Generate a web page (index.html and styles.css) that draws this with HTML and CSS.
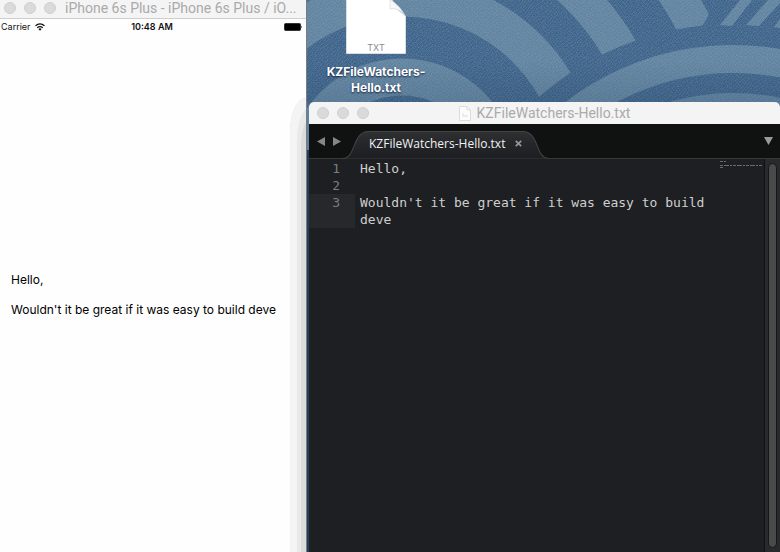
FILE: index.html
```html
<!DOCTYPE html>
<html lang="en">
<head>
<meta charset="utf-8">
<title>KZFileWatchers</title>
<link rel="stylesheet" href="styles.css">
</head>
<body>
<main class="desktop">
  <svg class="wallpaper" viewBox="0 0 780 552" preserveAspectRatio="xMinYMin slice" aria-hidden="true">
    <defs>
      <pattern id="denim" width="6" height="4" patternUnits="userSpaceOnUse">
        <path d="M0 0H1V1H0ZM3 0H4V1H3ZM2 1H3V2H2ZM5 2H6V3H5ZM1 2H2V3H1ZM4 3H5V4H4Z" fill="#b5cbd6"/>
      </pattern>
      <filter id="grain" x="0" y="0" width="100%" height="100%" color-interpolation-filters="sRGB">
        <feTurbulence type="fractalNoise" baseFrequency="0.8" numOctaves="2" seed="4"/>
        <feColorMatrix values="0 0 0 0 0.65  0 0 0 0 0.75  0 0 0 0 0.8  1.6 0 0 0 -0.6"/>
      </filter>
      <linearGradient id="shade" x1="0" y1="0" x2="0" y2="1">
        <stop offset="0" stop-color="#08203c" stop-opacity="0"/>
        <stop offset="1" stop-color="#08203c" stop-opacity=".12"/>
      </linearGradient>
    </defs>
    <rect width="780" height="552" fill="#3e638a"/>
    <g fill="none" stroke="#6183a0">
      <circle cx="402" cy="174" r="328" stroke-width="36"/>
      <circle cx="402" cy="174" r="251" stroke-width="36"/>
      <circle cx="402" cy="174" r="177" stroke-width="39"/>
      <circle cx="402" cy="174" r="97" stroke-width="37"/>
    </g>
    <path d="M709 14L703 25L690 30H720V0H702Z" fill="#3e638a"/>
    <circle cx="733" cy="319" r="295" fill="#3e638a"/>
    <path d="M740 0H752L732 26L720 25ZM768 0H780L780 3L759 26L746 25ZM780 19V28L774 27Z" fill="#6183a0"/>
    <circle cx="733" cy="319" r="260" fill="none" stroke="#6183a0" stroke-width="28"/>
    <circle cx="733" cy="319" r="226" fill="#5d80a0"/>
    <rect width="780" height="110" fill="url(#denim)" opacity=".12"/>
    <rect width="780" height="110" filter="url(#grain)" opacity=".3"/>
    <rect x="307" y="60" width="473" height="42" fill="url(#shade)"/>
    <rect y="150" width="780" height="402" fill="#213f5a"/>
  </svg>

  <section class="phone">
    <header class="titlebar phone-title">
      <span class="lights"><i></i><i></i><i></i></span>
      <h1>iPhone 6s Plus - iPhone 6s Plus / iO...</h1>
    </header>
    <div class="status">
      <span class="carrier">Carrier
        <svg width="10" height="8" viewBox="0 0 10 8" fill="none" stroke="#111" stroke-width="1.3"><path d="M.5 2.8Q5-1 9.5 2.8M2.2 4.8Q5 2.6 7.8 4.8"/><path d="M3.4 5.9Q5 4.8 6.6 5.9L5 7.8Z" fill="#111" stroke="none"/></svg>
      </span>
      <time>10:48 AM</time>
      <svg class="battery" width="19" height="8" viewBox="0 0 19 8"><rect x=".5" y=".5" width="16" height="7" rx="1" fill="#000" stroke="#333"/><path d="M17.3 2.6Q19 4 17.3 5.4Z" fill="#222"/></svg>
    </div>
    <div class="screen">
      <p>Hello,</p>
      <p>Wouldn't it be great if it was easy to build deve</p>
    </div>
    <span class="cast"></span>
  </section>

  <section class="right">
    <figure class="file">
      <svg width="60" height="54" viewBox="0 0 60 54"><path d="M.5-10H43Q45 6 59.500 16V53.500H.5Z" fill="#fff" stroke="#d8dde2"/><path d="M44-1L59 15Q52 7 44 9Z" fill="#e2e3e5"/><path d="M44-1V9Q51 7 59 15Q54 6 44-1Z" fill="#f7f7f7" stroke="#c9ccd0" stroke-width=".5"/><text x="30" y="51" text-anchor="middle" class="kind">TXT</text></svg>
      <figcaption>KZFileWatchers-<br>Hello.txt</figcaption>
    </figure>
    <article class="editor">
      <header class="titlebar editor-title">
        <span class="lights"><i></i><i></i><i></i></span>
        <h2><svg width="12" height="15" viewBox="0 0 12 15"><path d="M.5.5H8L11.500 4V14.500H.5Z" fill="#fcfcfc" stroke="#ddd"/><path d="M8 .5V4H11.500M3 10H9M3 8H5" fill="none" stroke="#ddd"/></svg>KZFileWatchers-Hello.txt</h2>
      </header>
      <nav class="tabs">
        <button class="nav-btn" aria-label="Previous tab"><svg width="8" height="9" viewBox="0 0 8 9"><path d="M8 0V9L0 4.500Z" fill="#868686"/></svg></button>
        <button class="nav-btn" aria-label="Next tab"><svg width="8" height="9" viewBox="0 0 8 9"><path d="M0 0V9L8 4.500Z" fill="#868686"/></svg></button>
        <div class="tab">
          <svg class="tab-shape" viewBox="0 0 202 29" preserveAspectRatio="none" aria-hidden="true"><defs><linearGradient id="tabfill" x1="0" y1="0" x2="0" y2="1"><stop offset="0" stop-color="#303133"/><stop offset=".5" stop-color="#242528"/><stop offset="1" stop-color="#1e1f23"/></linearGradient></defs><path d="M0 28.500C13 28 9 1.500 25 1.500H177C193 1.500 189 28 202 28.500" fill="url(#tabfill)" stroke="#434446"/></svg>
          <span>KZFileWatchers-Hello.txt</span>
          <button class="close" aria-label="Close tab"><svg width="7" height="7" viewBox="0 0 7 7"><path d="M.8.8L6.200 6.200M6.200.8L.8 6.200" stroke="#969696" stroke-width="1.700"/></svg></button>
        </div>
        <button class="more" aria-label="Tab list"><svg width="9" height="8" viewBox="0 0 9 8"><path d="M0 0H9L4.500 8Z" fill="#9a9a9a"/></svg></button>
      </nav>
      <div class="code">
        <ol class="lines">
          <li><span class="num">1</span><code>Hello,</code></li>
          <li><span class="num">2</span><code></code></li>
          <li class="current"><span class="num">3</span><code>Wouldn't it be great if it was easy to build deve</code></li>
        </ol>
        <svg class="minimap" width="44" height="9" viewBox="0 0 44 9" aria-hidden="true"><path d="M0 1.500H6M0 5.500H43M0 7.500H4" stroke="#6a6b6d" stroke-dasharray="3 1 5 1 2 1"/></svg>
        <div class="scroll"><span></span></div>
      </div>
    </article>
  </section>
</main>
</body>
</html>
```

FILE: styles.css
```css
* { box-sizing: border-box; }
body { margin: 0; font-family: Inter, "Liberation Sans", sans-serif; }
h1, h2, p, figure, ol { margin: 0; padding: 0; }
button { border: 0; padding: 0; background: none; display: flex; }
svg { display: block; }

.desktop {
  position: relative;
  display: grid;
  grid-template-columns: minmax(0, 307fr) minmax(0, 473fr);
  min-height: 100vh;
  overflow: hidden;
}
.wallpaper { position: absolute; inset: 0; width: 100%; height: 100%; }

.titlebar {
  display: flex;
  align-items: center;
  background: #f4f4f4;
  color: #aaa;
}
.titlebar h1, .titlebar h2 {
  font-family: Roboto, sans-serif;
  font-size: 14px;
  line-height: 16px;
  font-weight: 400;
  white-space: nowrap;
}
.lights { display: flex; flex: none; gap: 8px; }
.lights i {
  width: 12px;
  height: 12px;
  border: 1px solid #cfcfcf;
  border-radius: 50%;
  background: #dadada;
}

.phone {
  position: relative;
  display: flex;
  flex-direction: column;
  background: #fefefe;
  border-right: 1px solid #777d80;
}
.phone-title {
  height: 19px;
  padding: 0 4px 2px;
  gap: 9px;
  border-bottom: 1px solid #cecece;
}
.status {
  display: grid;
  grid-template-columns: 1fr auto 1fr;
  align-items: center;
  height: 16px;
  padding: 0 3px 1px 1px;
  font-size: 9px;
  color: #111;
}
.status time { font-weight: 600; }
.carrier { display: flex; align-items: center; gap: 4px; }
.battery { justify-self: end; }
.screen {
  flex: 1;
  display: flex;
  flex-direction: column;
  justify-content: center;
  gap: 14px;
  padding: 3px 11px 0;
  font-size: 12px;
  line-height: 16px;
  color: #000;
  white-space: nowrap;
}
.cast {
  position: absolute;
  top: 98px;
  right: 0;
  bottom: 0;
  width: 16px;
  border-top-left-radius: 16px 34px;
  background: #dcdcdc;
  box-shadow: inset 7px 7px #f4f4f4, inset 11px 14px #e9e9e9;
}

.right {
  position: relative;
  display: flex;
  flex-direction: column;
  padding-left: 2px;
}
.file { width: 134px; height: 102px; }
.file svg { margin: 0 auto; }
.kind { font: 9px Inter, sans-serif; fill: #888; }
.file figcaption {
  margin-top: 10px;
  text-align: center;
  font-size: 12px;
  line-height: 16px;
  font-weight: 700;
  color: #fff;
  text-shadow: 0 1px 2px #102040;
}

.editor {
  flex: 1;
  display: flex;
  flex-direction: column;
  border-radius: 5px 5px 0 0;
  overflow: hidden;
  background: #1e1f23;
}
.editor-title { height: 22px; padding: 0 8px; }
.editor-title h2 {
  display: flex;
  flex: 1;
  justify-content: center;
  align-items: center;
  gap: 6px;
  margin-right: 52px;
}
.tabs {
  display: flex;
  align-items: center;
  height: 35px;
  padding: 0 7px 0 8px;
  gap: 8px;
  background: #101211;
  border-bottom: 1px solid #38393b;
}
.tab {
  position: relative;
  align-self: flex-end;
  display: flex;
  align-items: center;
  gap: 10px;
  height: 29px;
  margin: 0 0 -1px -6px;
  padding: 0 26px 2px;
  color: #f2f2f2;
  font: 12px "Open Sans", sans-serif;
  white-space: nowrap;
}
.tab span, .close { position: relative; }
.tab-shape { position: absolute; inset: 0; width: 100%; height: 100%; }
.more { margin-left: auto; }

.code { flex: 1; display: flex; }
.lines {
  flex: 1;
  padding-top: 1px;
  list-style: none;
  font: 13px "DejaVu Sans Mono", monospace;
  color: #cdd0ce;
}
.lines li { display: flex; min-height: 17px; line-height: 17px; }
.num {
  flex: none;
  width: 46px;
  padding-right: 15px;
  text-align: right;
  color: #7c7d7f;
}
.current .num { background: #27282b; }
.lines code { font: inherit; padding-left: 5px; }
.minimap { flex: none; margin-top: 1px; }
.scroll {
  flex: none;
  display: flex;
  width: 16px;
  padding: 4px 3px;
  background: #292a2c;
  border-left: 1px solid #101113;
}
.scroll span {
  flex: 1;
  border: 1px solid #161719;
  border-radius: 5px;
  background: #4a4a4b;
}
```
